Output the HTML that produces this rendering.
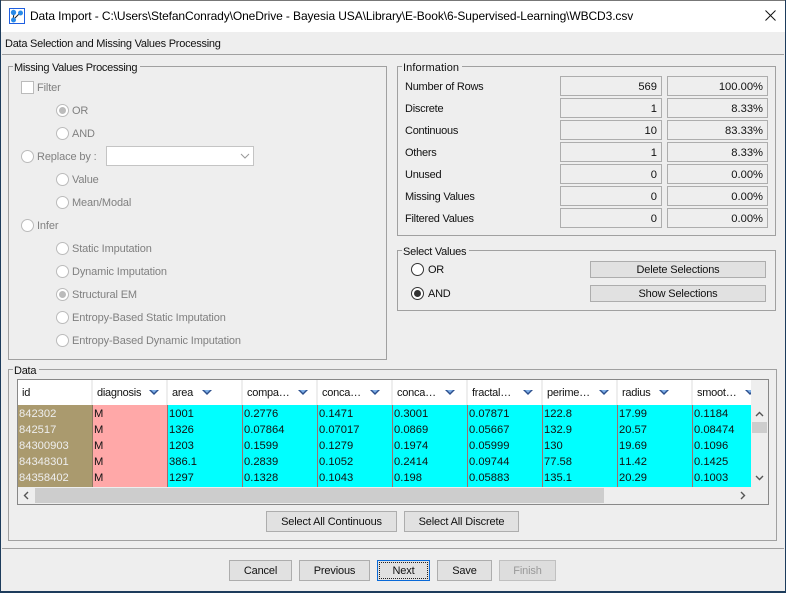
<!DOCTYPE html>
<html><head><meta charset="utf-8"><style>
html,body{margin:0;padding:0}
#w{position:relative;width:786px;height:593px;overflow:hidden;background:#eee;font:11px/16px "Liberation Sans",sans-serif;color:#111;letter-spacing:-.25px}
#w div,#w span.a{position:absolute;box-sizing:border-box}
.t{white-space:nowrap;height:16px;margin-top:1px}
.d{color:#808080;letter-spacing:-.13px}
.l{background:#eee;padding:0 3px 0 1px}
.g{border:1px solid #a0a0a0}
.f{border:1px solid #adadad;text-align:right;padding-right:4px;line-height:20px;height:20px;font-size:11.2px;letter-spacing:0;font-kerning:none}
.b{border:1px solid #adadad;background:#e1e1e1;text-align:center;line-height:21px;letter-spacing:-.15px}
.r{width:13px;height:13px;border:1px solid #bbb;border-radius:50%;background:#fff}
.r i{position:absolute;left:2px;top:2px;width:7px;height:7px;border-radius:50%;background:#bbb}
.h{top:380px;height:25px;background:#fff;line-height:26px;padding-left:4px;width:73px;white-space:nowrap}
.c{height:82px;top:405px;width:75px;background:#0ff;border-left:1px solid #a86a6a;padding-left:1px;padding-top:1px;line-height:16px;color:#111;white-space:pre;font-size:11.2px;letter-spacing:0;font-kerning:none}
.v{width:0;height:0;top:390px;border-left:5px solid transparent;border-right:5px solid transparent;border-top:5px solid #2c4f8c}
.v::after{content:"";position:absolute;left:-3px;top:-5px;width:0;height:0;border-left:3px solid transparent;border-right:3px solid transparent;border-top:3px solid #7fb0e8}
</style></head><body><div id="w">
<div style="left:0;top:0;width:786px;height:32px;background:#fff"></div>
<div style="left:0;top:0;width:786px;height:1px;background:#777"></div>
<div style="left:0;top:0;width:1px;height:593px;background:#1d3c5c"></div>
<div style="left:785px;top:0;width:1px;height:593px;background:#1d3c5c"></div>
<div style="left:0;top:591px;width:786px;height:2px;background:#1d3c5c"></div>
<svg style="position:absolute;left:9px;top:8px" width="16" height="16" viewBox="0 0 16 16"><rect x=".5" y=".5" width="15" height="15" fill="#fff" stroke="#1f5fe0"/><path d="M4 12L5 5M4 12L11.5 4.5" stroke="#222" fill="none"/><circle cx="4.5" cy="4.5" r="2.7" fill="#2a8be8"/><circle cx="11.5" cy="5" r="2.5" fill="#2a8be8"/><circle cx="4.5" cy="12" r="2.5" fill="#2a8be8"/></svg>
<div class="t" style="left:30px;top:7px;font-size:12px;color:#000;letter-spacing:-.105px">Data Import - C:\Users\StefanConrady\OneDrive - Bayesia USA\Library\E-Book\6-Supervised-Learning\WBCD3.csv</div>
<svg style="position:absolute;left:765px;top:10px" width="11" height="11" viewBox="0 0 11 11"><path d="M.5 .5L10.5 10.5M10.5 .5L.5 10.5" stroke="#111" fill="none"/></svg>
<div class="t" style="left:5px;top:35px">Data Selection and Missing Values Processing</div>
<div style="left:2px;top:54px;width:782px;height:1px;background:#a0a0a0"></div>

<div class="g" style="left:8px;top:66px;width:379px;height:294px"></div>
<div class="t l" style="left:13px;top:59px;letter-spacing:-.3px">Missing Values Processing</div>
<div style="left:21px;top:81px;width:13px;height:13px;border:1px solid #bbb;background:#fff"></div>
<div class="t d" style="left:37px;top:79px">Filter</div>
<div class="r" style="left:56px;top:104px"><i></i></div><div class="t d" style="left:72px;top:102px">OR</div>
<div class="r" style="left:56px;top:127px"></div><div class="t d" style="left:72px;top:125px">AND</div>
<div class="r" style="left:21px;top:150px"></div><div class="t d" style="left:37px;top:148px">Replace by :</div>
<div style="left:106px;top:146px;width:148px;height:20px;border:1px solid #c4c4c4;background:#fff"></div>
<svg style="position:absolute;left:240px;top:153px" width="10" height="6" viewBox="0 0 10 6"><path d="M1 1L5 5L9 1" stroke="#999" fill="none"/></svg>
<div class="r" style="left:56px;top:173px"></div><div class="t d" style="left:72px;top:171px">Value</div>
<div class="r" style="left:56px;top:196px"></div><div class="t d" style="left:72px;top:194px">Mean/Modal</div>
<div class="r" style="left:21px;top:219px"></div><div class="t d" style="left:37px;top:217px">Infer</div>
<div class="r" style="left:56px;top:242px"></div><div class="t d" style="left:72px;top:240px">Static Imputation</div>
<div class="r" style="left:56px;top:265px"></div><div class="t d" style="left:72px;top:263px">Dynamic Imputation</div>
<div class="r" style="left:56px;top:288px"><i></i></div><div class="t d" style="left:72px;top:286px">Structural EM</div>
<div class="r" style="left:56px;top:311px"></div><div class="t d" style="left:72px;top:309px">Entropy-Based Static Imputation</div>
<div class="r" style="left:56px;top:334px"></div><div class="t d" style="left:72px;top:332px">Entropy-Based Dynamic Imputation</div>

<div class="g" style="left:397px;top:66px;width:379px;height:170px"></div>
<div class="t l" style="left:402px;top:59px;letter-spacing:.1px">Information</div>
<div class="t" style="left:405px;top:78px">Number of Rows</div><div class="f" style="left:560px;top:76px;width:102px">569</div><div class="f" style="left:667px;top:76px;width:101px">100.00%</div>
<div class="t" style="left:405px;top:100px">Discrete</div><div class="f" style="left:560px;top:98px;width:102px">1</div><div class="f" style="left:667px;top:98px;width:101px">8.33%</div>
<div class="t" style="left:405px;top:122px">Continuous</div><div class="f" style="left:560px;top:120px;width:102px">10</div><div class="f" style="left:667px;top:120px;width:101px">83.33%</div>
<div class="t" style="left:405px;top:144px">Others</div><div class="f" style="left:560px;top:142px;width:102px">1</div><div class="f" style="left:667px;top:142px;width:101px">8.33%</div>
<div class="t" style="left:405px;top:166px">Unused</div><div class="f" style="left:560px;top:164px;width:102px">0</div><div class="f" style="left:667px;top:164px;width:101px">0.00%</div>
<div class="t" style="left:405px;top:188px">Missing Values</div><div class="f" style="left:560px;top:186px;width:102px">0</div><div class="f" style="left:667px;top:186px;width:101px">0.00%</div>
<div class="t" style="left:405px;top:210px">Filtered Values</div><div class="f" style="left:560px;top:208px;width:102px">0</div><div class="f" style="left:667px;top:208px;width:101px">0.00%</div>

<div class="g" style="left:397px;top:250px;width:379px;height:61px"></div>
<div class="t l" style="left:402px;top:243px">Select Values</div>
<div class="r" style="left:411px;top:263px;border-color:#333"></div><div class="t" style="left:428px;top:261px">OR</div>
<div class="r" style="left:411px;top:287px;border-color:#333"><i style="background:#333"></i></div><div class="t" style="left:428px;top:285px">AND</div>
<div class="b" style="left:590px;top:261px;width:176px;height:17px;line-height:16px">Delete Selections</div>
<div class="b" style="left:590px;top:285px;width:176px;height:17px;line-height:16px">Show Selections</div>

<div class="g" style="left:8px;top:369px;width:769px;height:172px"></div>
<div class="t l" style="left:13px;top:362px">Data</div>
<div class="g" style="left:17px;top:379px;width:752px;height:126px;background:#eee;border-color:#888"></div>

<div class="h" style="left:18px;width:73px">id</div>
<div class="h" style="left:93px">diagnosis</div><div class="v" style="left:149px"></div>
<div class="h" style="left:168px">area</div><div class="v" style="left:202px"></div>
<div class="h" style="left:243px">compa…</div><div class="v" style="left:298px"></div>
<div class="h" style="left:318px">conca…</div><div class="v" style="left:370px"></div>
<div class="h" style="left:393px">conca…</div><div class="v" style="left:445px"></div>
<div class="h" style="left:468px">fractal…</div><div class="v" style="left:523px"></div>
<div class="h" style="left:543px">perime…</div><div class="v" style="left:599px"></div>
<div class="h" style="left:618px">radius</div><div class="v" style="left:659px"></div>
<div class="h" style="left:693px;width:58px">smoot…</div>
<div style="left:745px;top:390px;width:6px;height:5px;overflow:hidden"><div class="v" style="left:0;top:0"></div></div>

<div class="c" style="left:18px;width:74px;background:#aa9a6e;border-left:0;color:#eee">842302
842517
84300903
84348301
84358402</div>
<div class="c" style="left:92px;background:#ffa8a8;border-left-color:#8a7a60">M
M
M
M
M</div>
<div class="c" style="left:167px">1001
1326
1203
386.1
1297</div>
<div class="c" style="left:242px">0.2776
0.07864
0.1599
0.2839
0.1328</div>
<div class="c" style="left:317px">0.1471
0.07017
0.1279
0.1052
0.1043</div>
<div class="c" style="left:392px">0.3001
0.0869
0.1974
0.2414
0.198</div>
<div class="c" style="left:467px">0.07871
0.05667
0.05999
0.09744
0.05883</div>
<div class="c" style="left:542px">122.8
132.9
130
77.58
135.1</div>
<div class="c" style="left:617px">17.99
20.57
19.69
11.42
20.29</div>
<div class="c" style="left:692px;width:59px">0.1184
0.08474
0.1096
0.1425
0.1003</div>

<div style="left:752px;top:422px;width:15px;height:11px;background:#cdcdcd"></div>
<svg style="position:absolute;left:755px;top:411px" width="9" height="6" viewBox="0 0 9 6"><path d="M1 5L4.5 1.5L8 5" stroke="#555" stroke-width="1.4" fill="none"/></svg>
<svg style="position:absolute;left:755px;top:475px" width="9" height="6" viewBox="0 0 9 6"><path d="M1 1L4.5 4.5L8 1" stroke="#555" stroke-width="1.4" fill="none"/></svg>
<div style="left:35px;top:488px;width:569px;height:15px;background:#cdcdcd"></div>
<svg style="position:absolute;left:23px;top:491px" width="6" height="9" viewBox="0 0 6 9"><path d="M5 1L1.5 4.5L5 8" stroke="#555" stroke-width="1.4" fill="none"/></svg>
<svg style="position:absolute;left:740px;top:491px" width="6" height="9" viewBox="0 0 6 9"><path d="M1 1L4.5 4.5L1 8" stroke="#555" stroke-width="1.4" fill="none"/></svg>

<div class="b" style="left:266px;top:511px;width:131px;height:21px">Select All Continuous</div>
<div class="b" style="left:404px;top:511px;width:115px;height:21px">Select All Discrete</div>

<div style="left:2px;top:548px;width:782px;height:1px;background:#a0a0a0"></div>
<div class="b" style="left:229px;top:560px;width:63px;height:21px">Cancel</div>
<div class="b" style="left:299px;top:560px;width:71px;height:21px">Previous</div>
<div class="b" style="left:377px;top:560px;width:53px;height:21px;border:1px solid #0a6ad8;outline:1px dotted #222;outline-offset:-3px">Next</div>
<div class="b" style="left:437px;top:560px;width:55px;height:21px">Save</div>
<div class="b" style="left:499px;top:560px;width:57px;height:21px;color:#999;border-color:#c0c0c0;background:#ddd">Finish</div>
</div></body></html>
